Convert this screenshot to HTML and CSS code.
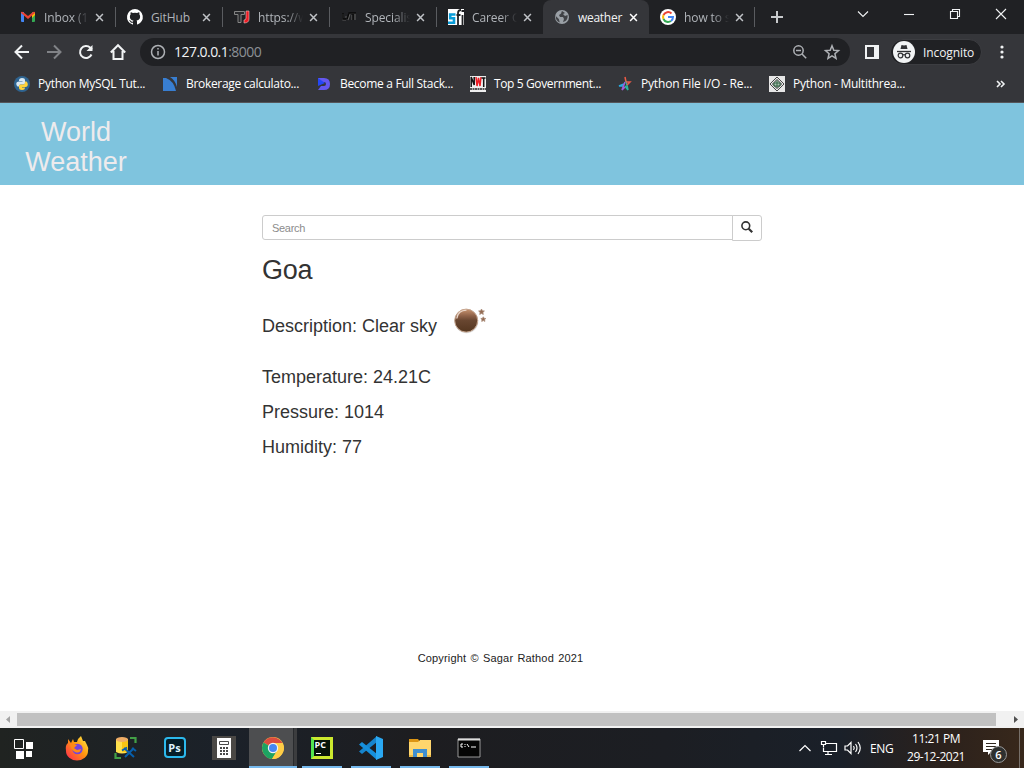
FILE: index.html
```html
<!DOCTYPE html>
<html lang="en">
<head>
<meta charset="utf-8">
<title>weather</title>
<link rel="stylesheet" href="styles.css">
</head>
<body>
<div class="screen">
  <header class="tabstrip">
    <div class="tab"><svg class="icon" viewBox="0 0 16 16"><path d="M1 3h3v10H2q-1 0-1-1z" fill="#4285f4"/><path d="M12 3h3v9q0 1-1 1h-2z" fill="#34a853"/><path d="M12 4l3-1v3l-3 3z" fill="#fbbc04"/><path d="M1 4q0-2 2-1l5 4 5-4q2-1 2 1l-7 6-7-6z" fill="#ea4335"/></svg><span class="tab-title fade">Inbox (1</span><svg class="close" viewBox="0 0 10 10"><path d="M1.2 1.2l7.6 7.6M8.8 1.2l-7.6 7.6"/></svg></div>
    <div class="tab"><svg class="icon" viewBox="0 0 16 16"><path fill="#fff" d="M8 0a8 8 0 0 0-2.5 15.6c.4.1.5-.2.5-.4v-1.5c-2.2.5-2.7-1-2.7-1-.4-.9-.9-1.2-.9-1.2-.7-.5.1-.5.1-.5.8.1 1.2.8 1.2.8.7 1.3 1.9.9 2.3.7.1-.5.3-.9.5-1.1-1.8-.2-3.6-.9-3.6-4 0-.9.3-1.6.8-2.1-.1-.2-.4-1 .1-2.1 0 0 .7-.2 2.2.8a7.500 7.500 0 0 1 4 0c1.500-1 2.200-.8 2.200-.8.4 1.100.2 1.900.1 2.100.5.6.8 1.300.8 2.100 0 3.100-1.900 3.700-3.600 3.900.3.300.5.800.5 1.500v2.300c0 .2.1.5.6.4A8 8 0 0 0 8 0z"/></svg><span class="tab-title">GitHub</span><svg class="close" viewBox="0 0 10 10"><path d="M1.2 1.2l7.6 7.6M8.8 1.2l-7.6 7.6"/></svg></div>
    <div class="tab"><svg class="icon" viewBox="0 0 16 16"><path d="M.5 2.500h10v3h-3.500v8h-3v-8h-3.500z" fill="#292a2d" stroke="#858585"/><path d="M12 2h3v8q0 4-5 4v-3q2 0 2-2z" fill="#ed1c24" stroke="#e8c2c2" stroke-width=".6"/></svg><span class="tab-title fade">https://w</span><svg class="close" viewBox="0 0 10 10"><path d="M1.2 1.2l7.6 7.6M8.8 1.2l-7.6 7.6"/></svg></div>
    <div class="tab"><svg class="icon" viewBox="0 0 16 16"><path d="M2 5v6h3M4 8h3M7 4.500h8M9 5l-2 6M11 6v5M14 5v6" stroke="#5a5a5a" stroke-width="1.200" fill="none"/><path d="M2 4v6h3M6 10l2-6h7M12 5v6" stroke="#080808" stroke-width="1.300" fill="none"/></svg><span class="tab-title fade">Specialis</span><svg class="close" viewBox="0 0 10 10"><path d="M1.2 1.2l7.6 7.6M8.8 1.2l-7.6 7.6"/></svg></div>
    <div class="tab"><svg class="icon" viewBox="0 0 16 16"><path fill="#fff" d="M0 0h16v16H0z"/><path d="M7.500 5.500H2.200v3.800H6v4.500H0" fill="none" stroke="#099cd8" stroke-width="2.600"/><path d="M10 16V4q0-3 3-3M8.500 6h4M14.500 6v10M13.500 2h2.500" fill="none" stroke="#202124" stroke-width="1.800"/></svg><span class="tab-title fade">Career G</span><svg class="close" viewBox="0 0 10 10"><path d="M1.2 1.2l7.6 7.6M8.8 1.2l-7.6 7.6"/></svg></div>
    <div class="tab active"><svg class="icon" viewBox="0 0 16 16"><circle cx="8" cy="8" r="7" fill="#9aa0a6"/><path d="M8 2c-1 1 0 2-1.500 3L5 6l1 2h3l1 2-1 3c4-1 5-4 4.500-7L11 7 9 5l2-1zM1.800 7l3 3 1 3.500C3 12.500 1.500 10 1.800 7z" fill="#404246"/></svg><span class="tab-title">weather</span><svg class="close" viewBox="0 0 10 10"><path d="M1.2 1.2l7.6 7.6M8.8 1.2l-7.6 7.6"/></svg></div>
    <div class="tab last"><svg class="icon" viewBox="0 0 16 16"><circle cx="8" cy="8" r="8" fill="#fff"/><g fill="none" stroke-width="2"><path d="M11.500 4.500A5 5 0 0 0 3.500 6" stroke="#ea4335"/><path d="M3.500 6a5 5 0 0 0 0 4" stroke="#fbbc04"/><path d="M3.500 10a5 5 0 0 0 7.500 2" stroke="#34a853"/><path d="M11 12a5 5 0 0 0 2-4H8" stroke="#4285f4"/></g></svg><span class="tab-title fade">how to s</span><svg class="close" viewBox="0 0 10 10"><path d="M1.2 1.2l7.6 7.6M8.8 1.2l-7.6 7.6"/></svg></div>
    <svg class="newtab" viewBox="0 0 12 12"><path d="M6 0v12M0 6h12"/></svg>
    <div class="window-buttons">
      <svg viewBox="0 0 12 12"><path d="M1 3.500l5 5 5-5"/></svg>
      <svg viewBox="0 0 12 12"><path d="M1 6.500h10"/></svg>
      <svg viewBox="0 0 12 12"><path d="M1.500 3.500h7v7h-7zM3.500 3.500v-2h7v7h-2"/></svg>
      <svg viewBox="0 0 12 12"><path d="M1 1l10 10M11 1L1 11"/></svg>
    </div>
  </header>

  <div class="toolbar">
    <div class="nav">
      <svg class="icon" viewBox="0 0 16 16"><path d="M15 8H2M8 1.500L1.500 8 8 14.500"/></svg>
      <svg class="icon dim" viewBox="0 0 16 16"><path d="M1 8h13M8 1.500L14.500 8 8 14.500"/></svg>
      <svg class="icon" viewBox="0 0 16 16"><path d="M13.500 10.500A6 6 0 1 1 12.300 3.800L14 5.500"/><path d="M14.500 1v6H8.500z" class="solid"/></svg>
      <svg class="icon" viewBox="0 0 16 16"><path d="M.8 8.500L8 1.200l7.200 7.300M3.500 7v8h9V7"/></svg>
    </div>
    <div class="omnibox">
      <svg class="icon line" viewBox="0 0 16 16"><circle cx="8" cy="8" r="6.500"/><path d="M8 7v4.500M8 4v1.600"/></svg>
      <span class="url">127.0.0.1<span class="port">:8000</span></span>
      <svg class="icon line zoomout" viewBox="0 0 16 16"><circle cx="6.500" cy="6.500" r="4.700"/><path d="M10 10l4.200 4.200M4 6.500h5"/></svg>
      <svg class="icon line star" viewBox="0 0 16 16"><path d="M8 1.800l1.800 4.400 4.700.4-3.600 3.100 1.100 4.600L8 11.800l-4 2.500 1.100-4.600-3.600-3.100 4.700-.4z"/></svg>
    </div>
    <svg class="panel" viewBox="0 0 14 14"><path d="M1 1h12v12H1z" fill="none" stroke="#f1f3f4" stroke-width="2"/><path d="M9 1h5v12H9z" fill="#f1f3f4"/></svg>
    <div class="incognito">
      <svg viewBox="0 0 22 22"><circle cx="11" cy="11" r="11" fill="#f1f3f4"/><path d="M7.500 8l1-4 2.500.6 2.500-.6 1 4z" fill="#303134"/><path d="M4 10.500h14" stroke="#303134" stroke-width="1.300"/><g fill="none" stroke="#303134" stroke-width="1.200"><circle cx="7.500" cy="14.500" r="2.300"/><circle cx="14.500" cy="14.500" r="2.300"/><path d="M9.800 14q1.200-.7 2.400 0"/></g></svg>
      <span>Incognito</span>
    </div>
    <svg class="more" viewBox="0 0 4 14"><circle cx="2" cy="2" r="1.600"/><circle cx="2" cy="7" r="1.600"/><circle cx="2" cy="12" r="1.600"/></svg>
  </div>

  <nav class="bookmarks">
    <a class="bm b1"><svg class="icon" viewBox="0 0 16 16"><circle cx="8" cy="8" r="8" fill="#2f6490"/><path d="M5 4.500Q5 2 8 2t3 2.200V7q0 1.500-1.500 1.500H6.500Q5 8.500 5 10.500H3.500Q2 9.500 2.300 7 2.700 5.500 5 5.500h3.500V5H5z" fill="#d8e8f3"/><path d="M11 11.500Q11 14 8 14t-3-2.200V10q0-1.500 1.500-1.500h3Q11 8.500 11 5.500h1.500q1.500 1 1.300 3.500-.3 2-2.300 2H8v.5z" fill="#ffd43b"/></svg><span>Python MySQL Tut...</span></a>
    <a class="bm b2"><svg class="icon" viewBox="0 0 16 16"><path d="M1 2h3q8 3 10 13H1z" fill="#387ed1"/><path d="M8 1h7v10Q13 4 8 1z" fill="#387ed1"/></svg><span>Brokerage calculato...</span></a>
    <a class="bm b3"><svg class="icon" viewBox="0 0 16 16"><path d="M2 2h6q6 0 6 6t-6 6H2l3-4h3q2 0 2-2T8 6H2z" fill="#6558ef"/><path d="M2 2l7 5-7 3z" fill="#2447f5"/></svg><span>Become a Full Stack...</span></a>
    <a class="bm b4"><svg class="icon" viewBox="0 0 16 16"><path fill="#eee" d="M0 0h16v16H0z"/><path d="M1.200 11V1l3 8V1" stroke="#111" stroke-width="1.500" fill="none"/><path d="M6 1l1 9 1.500-8L10 10l1-9" stroke="#ed1c24" stroke-width="1.500" fill="none"/><path d="M11.500 2h4M13.700 2v9" stroke="#111" stroke-width="1.500"/><path d="M0 13h16" stroke="#222" stroke-width="1.500" stroke-dasharray="2 .5"/></svg><span>Top 5 Government...</span></a>
    <a class="bm b5"><svg class="icon" viewBox="0 0 16 16"><g fill="none" stroke-width="1.500"><path d="M8 1l1 5" stroke="#f15b45"/><path d="M7 8l-5 2 4 0" stroke="#28abe2"/><path d="M8 6l-3 8 3-3" stroke="#a45ad8"/><path d="M9 5l2 9-3-4" stroke="#27b79e"/><path d="M9 6h4l-3 3" stroke="#e65a48"/></g></svg><span>Python File I/O - Re...</span></a>
    <a class="bm b6"><svg class="icon" viewBox="0 0 16 16"><path fill="#e6e6e6" d="M0 0h16v16H0z"/><path d="M8 1l7 7-7 7-7-7z" fill="#e6e6e6" stroke="#444"/><path d="M8 3.500L12.500 8 8 12.500 3.500 8z" fill="#a9c3b1" stroke="#333"/><path d="M5 7h6v3H5zM8 5v6" fill="none" stroke="#376447"/></svg><span>Python - Multithrea...</span></a>
    <svg class="overflow" viewBox="0 0 9 8"><path d="M1 1l3 3-3 3M5 1l3 3-3 3"/></svg>
  </nav>

  <main class="page">
    <div class="banner"><h1>World<br>Weather</h1></div>
    <section class="content">
      <form class="search">
        <div class="field">Search</div>
        <div class="button"><svg viewBox="0 0 12 12"><circle cx="4.800" cy="4.800" r="3.900"/><path d="M7.700 7.700L11.200 11.200" stroke-width="2.200"/></svg></div>
      </form>
      <h2>Goa</h2>
      <div class="description"><span>Description: Clear sky</span>
        <svg viewBox="0 0 34 28"><defs><linearGradient id="moon" x2="0" y2="1"><stop stop-color="#c99470"/><stop offset=".3" stop-color="#8d6047"/><stop offset=".5" stop-color="#684630"/><stop offset="1" stop-color="#54361f"/></linearGradient></defs><circle cx="12.500" cy="14.500" r="11.800" fill="#bbb" opacity=".55"/><circle cx="12.200" cy="13.600" r="11.500" fill="url(#moon)" stroke="#c5a58f" stroke-width="1"/><path d="M2.800 11.500Q4 3.500 12.500 3.200" fill="none" stroke="#ead6c9" stroke-width="1.300"/><path d="M27.500 2l.9 1.800 2 .2-1.500 1.400.4 2-1.800-1-1.800 1 .4-2-1.500-1.400 2-.2zM29.300 9.800l.8 1.500 1.700.2-1.200 1.200.3 1.700-1.600-.8-1.600.8.300-1.700-1.200-1.200 1.700-.2z" fill="#936a52" stroke="#a98b79" stroke-width=".8"/></svg>
      </div>
      <p>Temperature: 24.21C</p>
      <p>Pressure: 1014</p>
      <p>Humidity: 77</p>
    </section>
    <footer>Copyright © Sagar Rathod 2021</footer>
  </main>

  <div class="scrollbar"><svg viewBox="0 0 17 17"><path d="M10 5v7L6 8.500z" fill="#a3a3a3"/></svg><div class="thumb"></div><svg class="right" viewBox="0 0 17 17"><path d="M7 5v7l4-3.500z" fill="#505050"/></svg></div>

  <div class="taskbar">
    <div class="apps">
      <div class="app start"><svg viewBox="0 0 24 24"><path d="M2.500 3.500h9v9h-9z" fill="none" stroke="#fff"/><path d="M14 6h7v7h-7zM4 15h8v8H4zM14 15h6v6h-6z" fill="#fff"/></svg></div>
      <div class="app"><svg viewBox="0 0 24 24"><defs><linearGradient id="fire" x1="1" x2="0" y2="1"><stop stop-color="#fff44f"/><stop offset=".45" stop-color="#ff980e"/><stop offset="1" stop-color="#ff2056"/></linearGradient></defs><path d="M3 3l3 4 2-4 1 3 3 0q1-4 4-6l2 5 2 0 2 4q2 3 1 6a11 9.500 0 0 1-22 0Q0 9 3 7z" fill="url(#fire)"/><circle cx="12.500" cy="13" r="5.200" fill="#7444de"/><path d="M5 8l7 1-3 3 3 2 4-1q-1 5-6 3-4-2-5-8z" fill="#ff8a16"/></svg></div>
      <div class="app"><svg viewBox="0 0 24 24"><path d="M2 3v13q6 3 12 0V3z" fill="#ffe04c"/><path d="M8 4h6v12H8z" fill="#f9c513"/><ellipse cx="8" cy="3.500" rx="6" ry="2.500" fill="#efad66"/><path d="M16 2h5.500V7M1.500 17v5H7" fill="none" stroke="#43a047" stroke-width="2.200"/><path d="M10 12l10 9M20 12l-9 9M8 14.500l5-3M18 12l4 3" stroke="#075fad" stroke-width="2"/></svg></div>
      <div class="app"><div class="ps">Ps</div></div>
      <div class="app"><svg viewBox="0 0 24 24"><path fill="#4a4845" d="M0 0h24v24H0z"/><path fill="#fff" d="M5 2h14v20H5z"/><path fill="none" stroke="#494949" d="M7.500 5.500h9v3h-9z"/><path d="M8 12h8M8 15h8M8 18h8" stroke="#494949" stroke-width="2" stroke-dasharray="2 1"/></svg></div>
      <div class="app running current"><svg viewBox="0 0 24 24"><circle cx="12" cy="12" r="11" fill="#ffcd46"/><path d="M12 12L2.500 6.500A11 11 0 0 1 21.500 7H12z" fill="#db4c3f"/><path d="M12 12l4 3-5 8A11 11 0 0 1 2.500 6.500z" fill="#1da362"/><path d="M12 7h9.500A11 11 0 0 1 11 23l5.500-9z" fill="#ffcd46"/><circle cx="12" cy="12" r="5.200" fill="#f2f2f2"/><circle cx="12" cy="12" r="4" fill="#4587f4"/></svg></div>
      <div class="app running"><div class="pc">PC<i></i></div></div>
      <div class="app running"><svg viewBox="0 0 24 24"><path d="M18 0v6L3 18l-3-2.500z" fill="#1684cc"/><path d="M3 6L0 8.500 18 24v-6z" fill="#168fdb"/><path d="M17 0l7 3v18l-7 3z" fill="#2aa8f2"/></svg></div>
      <div class="app running"><svg viewBox="0 0 24 24"><path d="M1 3h9l2 3H1z" fill="#dc9514"/><path d="M1 6h9l2-2h11v17H1z" fill="#ffd66d"/><path d="M5 21v-8h14v8h-4v-4H9v4z" fill="#3f8fd1"/><path d="M1 20h4M19 20h4" stroke="#e9b947" stroke-width="2"/></svg></div>
      <div class="app running"><svg viewBox="0 0 24 24"><path d="M1 3h22v18H1z" fill="#050505" stroke="#999"/><path d="M1 3.500h22" stroke="#ddd" stroke-width="2"/><path d="M6 8H4v3h2M8 8v1M8 10v1M10 8l2 3M14 11h5" fill="none" stroke="#fff"/></svg></div>
    </div>
    <div class="tray">
      <svg class="chev" viewBox="0 0 12 12"><path d="M.5 9L6 3.500 11.500 9"/></svg>
      <svg class="net" viewBox="0 0 18 16"><path d="M5 3.500h11.500v8H3.500v-4M8 12v3M5 14.500h7M1.500 1.500h4v3h-4zM3.500 4v3"/></svg>
      <svg class="vol" viewBox="0 0 18 16"><path d="M1 6h2.500L7 2.500v11L3.500 10H1zM9.500 6q1.500 2 0 4M11.500 4q3 4 0 8M14 2q4.500 6 0 12"/></svg>
      <span class="lang">ENG</span>
      <div class="clock"><span>11:21 PM</span><span>29-12-2021</span></div>
      <div class="notice"><svg viewBox="0 0 16 16"><path d="M0 0h16v12H8l-3 3v-3H0z" fill="#fff"/><path d="M3 3.500h10M3 6.500h10M3 9.500h6" stroke="#302820"/></svg><span class="count">6</span></div>
    </div>
  </div>
</div>
</body>
</html>
```
FILE: styles.css
```css
* { box-sizing: border-box; }
body { margin: 0; font-family: "Open Sans", "Noto Sans", sans-serif; }
.screen { width: 1024px; height: 768px; display: flex; flex-direction: column; overflow: hidden; background: #fff; }
svg { display: block; flex: none; overflow: visible; }
.icon { width: 16px; height: 16px; }

.tabstrip { height: 34px; flex: none; display: flex; align-items: flex-start; background: #202124; padding-left: 9px; }
.tab { width: 107px; height: 34px; flex: none; display: flex; align-items: center; padding: 0 11px; color: #b0b4b9; font-size: 12px; background: linear-gradient(#5a5c60, #5a5c60) right 0 top 7px / 1px 20px no-repeat; }
.tab:nth-child(5) { background: none; width: 106px; }
.tab-title { width: 51px; margin-left: 8px; white-space: nowrap; letter-spacing: -.1px; }
.fade { -webkit-mask-image: linear-gradient(90deg, #000 29px, transparent 45px); mask-image: linear-gradient(90deg, #000 29px, transparent 45px); }
.close { width: 9px; height: 9px; stroke: #bfc2c6; stroke-width: 1.7; }
.tab.active { width: 106px; background: #35363a; border-radius: 8px 8px 0 0; color: #f1f3f4; }
.tab.active .tab-title { letter-spacing: -.28px; }
.tab.active .close { stroke: #fff; }
.tab.last { width: 106px; }
.newtab { width: 12px; height: 12px; margin: 11px 0 0 16px; stroke: #c8cacc; stroke-width: 2; }
.window-buttons { display: flex; gap: 34px; margin: 8px 0 0 74px; fill: none; stroke: #f1f3f4; stroke-width: 1.1; }
.window-buttons svg { width: 12px; height: 12px; }

.toolbar { height: 36px; flex: none; display: flex; align-items: center; background: #35363a; padding-left: 14px; }
.nav { display: flex; gap: 16px; fill: none; stroke: #f1f3f4; stroke-width: 2; }
.nav .dim { stroke: #818387; }
.nav .solid { fill: #f1f3f4; stroke: none; }
.omnibox { width: 710px; height: 28px; margin-left: 14px; border-radius: 14px; background: #202124; display: flex; align-items: center; padding: 0 10px; }
.line { fill: none; stroke: #aeb1b5; stroke-width: 1.5; }
.url { margin-left: 8px; font-size: 14px; line-height: 20px; color: #f1f3f4; letter-spacing: -.54px; }
.port { color: #8c9196; }
.zoomout { margin-left: auto; }
.star { margin-left: 16px; }
.panel { width: 14px; height: 14px; margin-left: 15px; }
.incognito { width: 92px; height: 26px; margin-left: 11px; display: flex; align-items: center; padding-left: 2px; background: #202124; border: 1px solid #3c3d41; border-radius: 14px; color: #f1f3f4; font-size: 12px; letter-spacing: -.1px; }
.incognito svg { width: 22px; height: 22px; margin-right: 8px; }
.more { width: 4px; height: 14px; margin-left: 18px; fill: #f1f3f4; }

.bookmarks { height: 33px; flex: none; display: flex; align-items: flex-start; padding: 6px 0 0 14px; background: #35363a; border-bottom: 1px solid #55565a; color: #fff; font-size: 12px; line-height: 16px; }
.bm { display: flex; gap: 8px; flex: none; white-space: nowrap; letter-spacing: -.27px; }
.b1 { width: 148px; }
.b2 { width: 154px; letter-spacing: -.32px; }
.b3 { width: 154px; letter-spacing: -.31px; }
.b4 { width: 147px; letter-spacing: -.38px; }
.b5 { width: 152px; letter-spacing: -.18px; }
.b6 { width: 155px; letter-spacing: -.24px; }
.overflow { width: 9px; height: 8px; margin: 4px 0 0 72px; fill: none; stroke: #f1f3f4; stroke-width: 1.6; }

.page { height: 608px; flex: none; background: #fff; font-family: "Liberation Sans", Arial, sans-serif; color: #333; }
.banner { height: 82px; background: #7fc4de; padding-top: 14px; }
h1, h2, p { margin: 0; font-weight: 400; }
h1 { width: 152px; text-align: center; color: #eeebed; font-size: 27px; line-height: 30px; }
.content { width: 500px; margin: 30px auto 0; }
.search { display: flex; height: 26px; }
.field { width: 471px; height: 25px; border: 1px solid #ccc; border-radius: 3px 0 0 3px; padding-left: 9px; font-size: 11px; line-height: 24px; letter-spacing: -.3px; color: #8c8c8c; }
.button { width: 30px; height: 26px; margin-left: -1px; border: 1px solid #ccc; border-radius: 0 3px 3px 0; display: flex; justify-content: center; align-items: center; }
.button svg { width: 12px; height: 12px; fill: none; stroke: #333; stroke-width: 1.6; margin-top: -3px; }
h2 { font-size: 27px; line-height: 30px; margin-top: 14px; letter-spacing: -.2px; }
.description { height: 71px; margin-top: 22px; display: flex; align-items: flex-start; font-size: 18px; line-height: 20px; }
.description span { margin-top: 9px; }
.description svg { width: 34px; height: 28px; margin-left: 17px; }
p { font-size: 18px; line-height: 20px; height: 35px; }
.content p:first-of-type { margin-top: -11px; }
footer { width: 1001px; margin-top: 179px; text-align: center; color: #222; font-size: 11px; line-height: 14px; letter-spacing: .17px; word-spacing: 1px; }

.scrollbar { height: 17px; flex: none; display: flex; align-items: center; background: #f1f1f1; }
.scrollbar svg { width: 17px; height: 17px; }
.scrollbar .right { margin-left: auto; }
.thumb { width: 979px; height: 13px; background: #c1c1c1; }

.taskbar { height: 40px; flex: none; display: flex; justify-content: space-between; background: linear-gradient(90deg, #202321, #1b2129 22%, #1d1d20 40%, #1c1e23 65%, #1a2029 82%, #2b211c 92%, #38281b); color: #fff; }
.apps { display: flex; }
.app { width: 49px; height: 40px; display: flex; align-items: center; justify-content: center; }
.app svg { width: 24px; height: 24px; }
.app.start { width: 52px; padding-right: 4px; }
.running { background: linear-gradient(#76b9ed, #76b9ed) center bottom / 40px 2px no-repeat; }
.current { background: linear-gradient(#76b9ed, #76b9ed) right bottom / 48px 2px no-repeat, linear-gradient(90deg, transparent 1px, #4d4e50 1px, #4d4e50 45px, #292b2e 45px, #292b2e 46px, #3c3d3f 46px); }
.ps { width: 22px; height: 21px; margin-bottom: 2px; border: 2px solid #2cb9ed; border-radius: 4px; background: #061e28; color: #def5ff; font-size: 11px; font-weight: 700; line-height: 17px; text-align: center; }
.pc { width: 22px; height: 22px; border: 3px solid #cce92e; border-left-color: #53e54e; background: #07130a; color: #fff; font: bold 9px/10px "Open Sans", sans-serif; padding-left: 1px; }
.pc i { display: block; width: 5px; height: 1px; margin: 3px 0 0 1px; background: #fff; }
.tray { width: 226px; display: flex; align-items: center; border-right: 1px solid #77706a; margin-right: 4px; font-size: 12px; }
.chev, .net, .vol { fill: none; stroke: #fff; stroke-width: 1.2; }
.chev { width: 12px; height: 12px; margin-left: 5px; }
.net { width: 18px; height: 16px; margin-left: 9px; }
.vol { width: 18px; height: 16px; margin-left: 6px; }
.lang { width: 26px; margin-left: 8px; letter-spacing: -.4px; }
.clock { width: 66px; margin-left: 7px; display: flex; flex-direction: column; align-items: center; line-height: 18px; letter-spacing: -.47px; white-space: nowrap; }
.notice { position: relative; width: 24px; height: 24px; margin: 8px 0 0 14px; }
.notice svg { width: 16px; height: 16px; }
.count { position: absolute; left: 7px; top: 6px; width: 17px; height: 17px; border: 1px solid #999; border-radius: 50%; background: #2e302f; font-size: 11px; font-weight: 600; line-height: 15px; text-align: center; }
```
